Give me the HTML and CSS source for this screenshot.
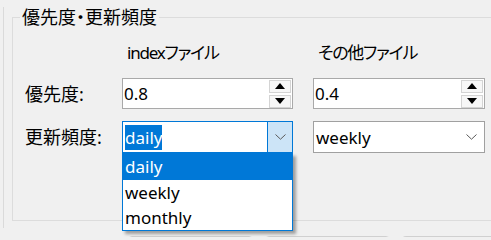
FILE: index.html
```html
<!DOCTYPE html>
<html lang="ja">
<head>
<meta charset="utf-8">
<title>優先度・更新頻度</title>
<link rel="stylesheet" href="styles.css">
</head>
<body>
<div class="frame">
  <fieldset class="group">
    <legend class="group-title">優先度・更新頻度</legend>
    <div class="grid">
      <div class="cell"></div>
      <div class="col-head">indexファイル</div>
      <div class="col-head">その他ファイル</div>

      <div class="label">優先度:</div>
      <div class="spin">
        <span class="spin-value">0.8</span>
        <div class="spin-buttons">
          <div class="spin-btn"><svg width="10" height="6" viewBox="0 0 10 6"><polygon points="5,0 10,6 0,6" fill="#000"/></svg></div>
          <div class="spin-btn"><svg width="10" height="6" viewBox="0 0 10 6"><polygon points="0,0 10,0 5,6" fill="#000"/></svg></div>
        </div>
      </div>
      <div class="spin">
        <span class="spin-value">0.4</span>
        <div class="spin-buttons">
          <div class="spin-btn"><svg width="10" height="6" viewBox="0 0 10 6"><polygon points="5,0 10,6 0,6" fill="#000"/></svg></div>
          <div class="spin-btn"><svg width="10" height="6" viewBox="0 0 10 6"><polygon points="0,0 10,0 5,6" fill="#000"/></svg></div>
        </div>
      </div>

      <div class="label">更新頻度:</div>
      <div class="combo combo-open">
        <span class="combo-value"><span class="selected-text">daily</span></span>
        <div class="combo-arrow"><svg width="11" height="6" viewBox="0 0 11 6"><polyline points="0.5,0.5 5.5,5.2 10.5,0.5" fill="none" stroke="#5a5a5a" stroke-width="1"/></svg></div>
        <ul class="dropdown">
          <li class="item item-active">daily</li>
          <li class="item">weekly</li>
          <li class="item">monthly</li>
        </ul>
      </div>
      <div class="combo">
        <span class="combo-value">weekly</span>
        <div class="combo-arrow plain"><svg width="11" height="6" viewBox="0 0 11 6"><polyline points="0.5,0.5 5.5,5.2 10.5,0.5" fill="none" stroke="#5a5a5a" stroke-width="1"/></svg></div>
      </div>
    </div>
  </fieldset>
</div>
<div class="button-row">
  <div class="btn"></div>
  <div class="btn"></div>
  <div class="btn"></div>
</div>
</body>
</html>
```
FILE: styles.css
```css
html, body {
  margin: 0;
  padding: 0;
  background: #f0f0f0;
  overflow: hidden;
}
body {
  width: 491px;
  height: 237px;
  font-family: "Noto Sans", "Noto Sans CJK JP", sans-serif;
  font-feature-settings: "palt";
  font-size: 17px;
  color: #000;
}
.frame {
  margin-left: 3px;
  border-left: 1px solid #dadada;
  padding-left: 8px;
  height: 221px;
  box-sizing: border-box;
}
.group {
  margin: 0;
  padding: 0;
  margin-top: 7px;
  min-width: 0;
  height: 214px;
  box-sizing: border-box;
  border: 1px solid #dcdcdc;
  border-right: none;
  border-radius: 0;
}
.group-title {
  margin-left: 7px;
  padding: 0 2px;
  font-size: 18px;
  line-height: 20px;
}
.grid {
  display: grid;
  grid-template-columns: 77px 171px 172px;
  grid-template-rows: 26px 31px 32px;
  column-gap: 20px;
  row-gap: 12px;
  padding-left: 12px;
  margin-top: 13px;
  align-items: center;
}
.col-head {
  padding-left: 5px;
  line-height: 26px;
  font-size: 17px;
  letter-spacing: -1.2px;
  white-space: nowrap;
}
.label {
  font-size: 18px;
  line-height: 24px;
  white-space: nowrap;
}
.spin {
  height: 31px;
  box-sizing: border-box;
  border: 1px solid #a9a9a9;
  background: #fff;
  display: flex;
  align-items: center;
  justify-content: space-between;
}
.spin-value {
  padding-left: 1px;
}
.spin-buttons {
  display: flex;
  flex-direction: column;
  gap: 2px;
  margin-right: 1px;
}
.spin-btn {
  width: 20px;
  height: 11px;
  border: 1px solid #d4d4d4;
  background: #f7f7f7;
  display: flex;
  align-items: center;
  justify-content: center;
}
.combo {
  position: relative;
  height: 32px;
  box-sizing: border-box;
  border: 1px solid #a0a0a0;
  background: #fff;
  display: flex;
  align-items: stretch;
}
.combo-open {
  border-color: #0078d7;
}
.combo-value {
  flex: 1;
  display: flex;
  align-items: center;
  padding-left: 2px;
}
.selected-text {
  background: #0078d7;
  color: #fff;
  line-height: 25px;
}
.combo-arrow {
  width: 24px;
  display: flex;
  align-items: center;
  justify-content: center;
  background: #cce4f7;
  border-left: 1px solid #0078d7;
}
.combo-arrow.plain {
  background: transparent;
  border-left: none;
  width: 26px;
}
.dropdown {
  position: absolute;
  left: -1px;
  top: 31px;
  width: 171px;
  margin: 0;
  padding: 0;
  list-style: none;
  box-sizing: border-box;
  border: 1px solid #0078d7;
  background: #fff;
  box-shadow: 3px 3px 3px rgba(0, 0, 0, 0.35);
  z-index: 5;
}
.item {
  height: 25px;
  line-height: 25px;
  padding-left: 2px;
}
.item-active {
  background: #0078d7;
  color: #fff;
  height: 26px;
}
.button-row {
  display: flex;
  gap: 12px;
  margin-top: 8px;
  margin-left: 128px;
  height: 8px;
  overflow: hidden;
}
.btn {
  flex: none;
  width: 125px;
  height: 12px;
  box-sizing: border-box;
  border: 1px solid #d0d0d0;
  border-radius: 4px;
  background: #fdfdfd;
}
.button-row .btn:last-child {
  width: 89px;
  border-right: none;
  border-top-right-radius: 0;
}
```
